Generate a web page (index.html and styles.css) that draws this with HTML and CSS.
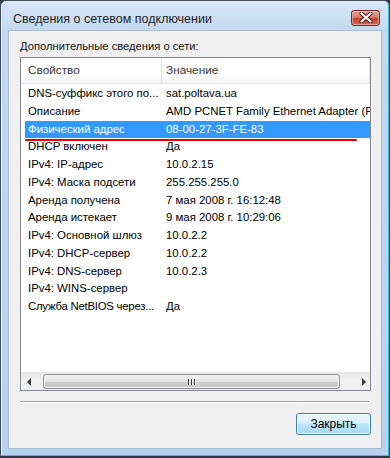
FILE: index.html
```html
<!DOCTYPE html>
<html lang="ru">
<head>
<meta charset="utf-8">
<title>Сведения о сетевом подключении</title>
<link rel="stylesheet" href="styles.css">
</head>
<body>
<div class="window">
  <div class="titlebar">
    <span class="title">Сведения о сетевом подключении</span>
    <button class="close" aria-label="Закрыть">
      <svg width="14" height="11" viewBox="0 0 14 11">
        <path d="M2.5 1.5 L11.5 9.5 M11.5 1.5 L2.5 9.5" stroke="#4a1515" stroke-width="4" stroke-linecap="round"/>
        <path d="M2.5 1.5 L11.5 9.5 M11.5 1.5 L2.5 9.5" stroke="#ffffff" stroke-width="2.2" stroke-linecap="round"/>
      </svg>
    </button>
  </div>
  <div class="client">
    <div class="caption">Дополнительные сведения о сети:</div>
    <div class="listbox">
      <div class="header">
        <div class="hcell c1">Свойство</div>
        <div class="hcell c2">Значение</div>
        <div class="hcell c3"></div>
      </div>
      <div class="rows">
        <div class="row"><span class="c1">DNS-суффикс этого по...</span><span class="c2">sat.poltava.ua</span></div>
        <div class="row"><span class="c1">Описание</span><span class="c2">AMD PCNET Family Ethernet Adapter (PCI)</span></div>
        <div class="row selected"><span class="c1">Физический адрес</span><span class="c2">08-00-27-3F-FE-83</span></div>
        <div class="row"><span class="c1">DHCP включен</span><span class="c2">Да</span></div>
        <div class="row"><span class="c1">IPv4: IP-адрес</span><span class="c2">10.0.2.15</span></div>
        <div class="row"><span class="c1">IPv4: Маска подсети</span><span class="c2">255.255.255.0</span></div>
        <div class="row"><span class="c1">Аренда получена</span><span class="c2">7 мая 2008 г. 16:12:48</span></div>
        <div class="row"><span class="c1">Аренда истекает</span><span class="c2">9 мая 2008 г. 10:29:06</span></div>
        <div class="row"><span class="c1">IPv4: Основной шлюз</span><span class="c2">10.0.2.2</span></div>
        <div class="row"><span class="c1">IPv4: DHCP-сервер</span><span class="c2">10.0.2.2</span></div>
        <div class="row"><span class="c1">IPv4: DNS-сервер</span><span class="c2">10.0.2.3</span></div>
        <div class="row"><span class="c1">IPv4: WINS-сервер</span><span class="c2"></span></div>
        <div class="row"><span class="c1 tight">Служба NetBIOS через...</span><span class="c2">Да</span></div>
      </div>
      <div class="hscroll">
        <div class="arrow left"><svg width="6" height="8" viewBox="0 0 6 8"><path d="M4 0 L0 4 L4 8 Z" fill="#3a3a3a"/></svg></div>
        <div class="track">
          <div class="thumb"><span class="grip"></span><span class="grip"></span><span class="grip"></span></div>
        </div>
        <div class="arrow right"><svg width="6" height="8" viewBox="0 0 6 8"><path d="M1 0 L5 4 L1 8 Z" fill="#3a3a3a"/></svg></div>
      </div>
    </div>
    <div class="separator"></div>
    <div class="buttons">
      <button class="btn">Закрыть</button>
    </div>
  </div>
</div>
</body>
</html>
```

FILE: styles.css
```css
html, body {
  margin: 0;
  padding: 0;
}
body {
  width: 390px;
  height: 458px;
  overflow: hidden;
  background: #2b3a4a;
  font-family: "Liberation Sans", Arial, sans-serif;
  font-size: 12px;
}
.window {
  box-sizing: border-box;
  width: 390px;
  height: 458px;
  border-left: 1px solid #3e4e60;
  border-top: 1px solid #3e4e60;
  border-right: 1px solid #2a3644;
  border-bottom: 2px solid #2a3644;
  border-radius: 6px 6px 0 0;
  background: linear-gradient(180deg, #d7e6f6 0px, #c4d9f0 30px, #b9d1ec 100%);
  box-shadow: inset -1px -1px 0 #35c3dc, inset 1px 1px 0 #e8f1fb;
  display: flex;
  flex-direction: column;
  padding: 0 7px 7px 7px;
}
.titlebar {
  height: 29px;
  flex: none;
  display: flex;
  align-items: center;
  justify-content: space-between;
  padding: 0 2px 0 5px;
}
.title {
  font-size: 12.5px;
  color: #1e1e1e;
  margin-top: 6px;
}
.close {
  width: 29px;
  height: 16px;
  margin-top: 4px;
  padding: 0;
  border: 1px solid #7a2a22;
  border-radius: 3px;
  background: linear-gradient(180deg, #eba493 0%, #d9786a 45%, #c1402c 55%, #d26a52 100%);
  box-shadow: inset 0 0 0 1px rgba(255,210,200,0.55);
  display: flex;
  align-items: center;
  justify-content: center;
}
.client {
  flex: 1;
  min-height: 0;
  background: #f0f0f0;
  border: 1px solid #a6bcd6;
  display: flex;
  flex-direction: column;
  padding: 0 11px 0 11px;
}
.caption {
  color: #111;
  height: 26px;
  flex: none;
  line-height: 30px;
  font-size: 11.2px;
}
.listbox {
  height: 334px;
  flex: none;
  box-sizing: border-box;
  border: 1px solid #828790;
  background: #fff;
  display: flex;
  flex-direction: column;
  width: 351px;
}
.header {
  height: 25px;
  display: flex;
  border-bottom: 1px solid #e5e5e5;
  background: linear-gradient(180deg, #ffffff 0%, #ffffff 60%, #f5f6f7 100%);
  flex: none;
}
.hcell {
  line-height: 25px;
  color: #3a3a3a;
  box-sizing: border-box;
  font-size: 11.8px;
}
.hcell.c1 {
  width: 141px;
  padding-left: 7px;
  border-right: 1px solid #e2e3e6;
}
.hcell.c2 {
  width: 208px;
  padding-left: 4px;
  border-right: 1px solid #e2e3e6;
}
.hcell.c3 {
  flex: 1;
}
.rows {
  flex: none;
  padding-top: 1px;
  overflow: hidden;
}
.row {
  height: 17.75px;
  line-height: 17.75px;
  display: flex;
  white-space: nowrap;
  color: #000;
  margin-left: 4px;
  position: relative;
  font-size: 11.4px;
}
.row .c1 {
  width: 137px;
  padding-left: 3px;
  box-sizing: border-box;
  flex: none;
  overflow: hidden;
}
.row .c1.tight {
  letter-spacing: -0.25px;
}
.row .c2 {
  padding-left: 4px;
  flex: none;
}
.row.selected {
  background: #3399ff;
  color: #fff;
}
.row.selected::after {
  content: "";
  position: absolute;
  left: 0;
  width: 332px;
  bottom: -3px;
  height: 2px;
  background: #e00000;
  border-radius: 1px;
}
.hscroll {
  margin-top: auto;
  height: 17px;
  flex: none;
  display: flex;
  align-items: center;
  background: linear-gradient(180deg, #e6e6e6, #f0f0f0 40%, #f2f2f2);
  border-top: 1px solid #e8e8e8;
}
.arrow {
  width: 17px;
  height: 17px;
  display: flex;
  align-items: center;
  justify-content: center;
  flex: none;
}
.arrow.left { padding-right: 2px; }
.track {
  flex: 1;
  height: 17px;
  display: flex;
  align-items: center;
  padding: 0 15px 0 3px;
}
.thumb {
  box-sizing: border-box;
  width: 297px;
  height: 15px;
  border: 1px solid #8f8f8f;
  border-radius: 3px;
  background: linear-gradient(180deg, #f2f2f2 0%, #e3e3e3 50%, #cfcfcf 51%, #c8c8c8 100%);
  box-shadow: inset 0 0 0 1px #f7f7f7;
  display: flex;
  align-items: center;
  justify-content: center;
  gap: 2px;
}
.grip {
  width: 1px;
  height: 6px;
  background: #3c3c3c;
  box-shadow: 1px 0 0 #ffffff;
}
.separator {
  margin-top: 10px;
  flex: none;
  width: 349px;
  height: 1px;
  background: #a0a0a0;
  border-bottom: 1px solid #ffffff;
}
.buttons {
  display: flex;
  flex: none;
  justify-content: flex-end;
  margin-top: 10px;
  width: 351px;
}
.btn {
  width: 75px;
  height: 22px;
  box-sizing: border-box;
  border: 1px solid #3c7fb1;
  border-radius: 3px;
  background: linear-gradient(180deg, #eaf6fd 0%, #d9f0fc 45%, #bee6fd 50%, #a7d9f5 100%);
  box-shadow: inset 0 0 0 1px #ffffff;
  font-family: "Liberation Sans", Arial, sans-serif;
  font-size: 12px;
  color: #000;
  padding: 0;
}
```
